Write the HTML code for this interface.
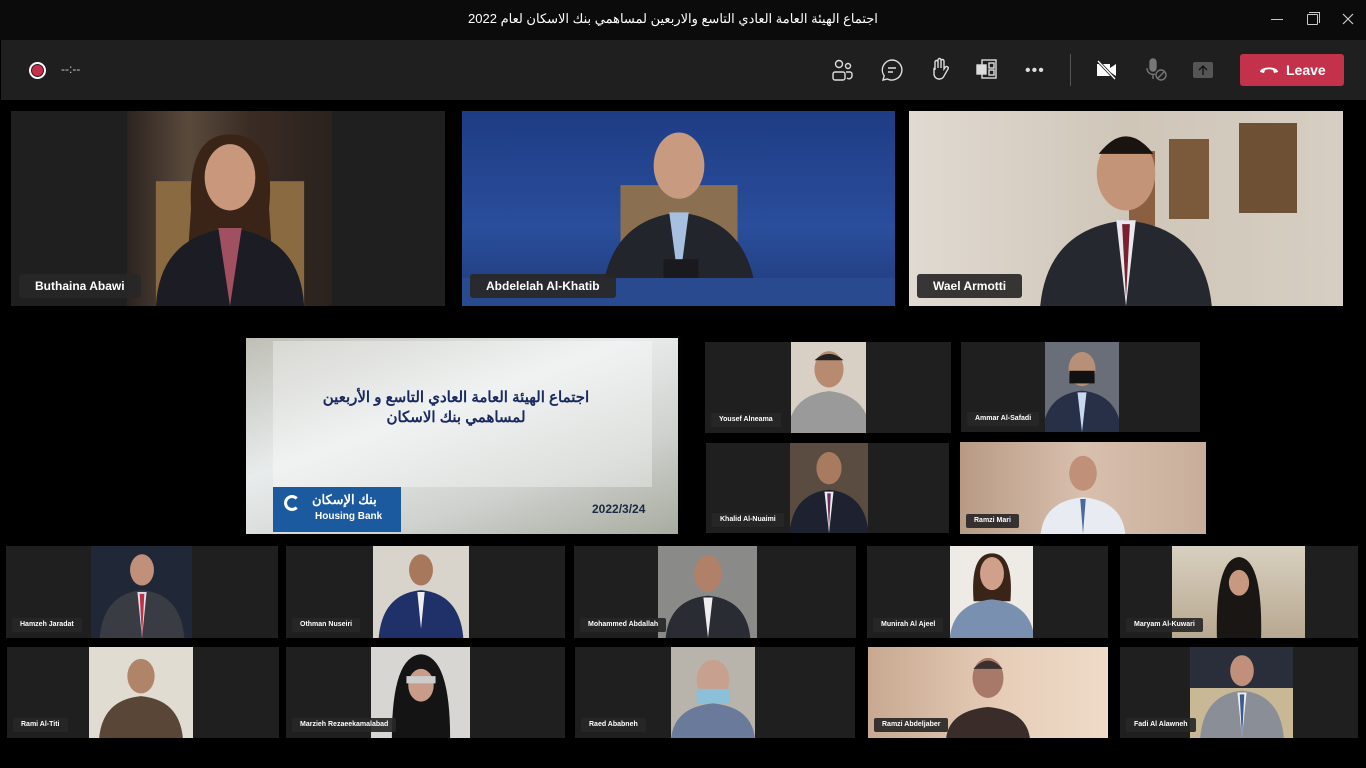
<!DOCTYPE html>
<html><head><meta charset="utf-8"><style>
*{margin:0;padding:0;box-sizing:border-box}
body{width:1366px;height:768px;background:#000;position:relative;overflow:hidden;font-family:"Liberation Sans","Noto Sans CJK SC",sans-serif}
.a{position:absolute}
.t{position:absolute;background:#201f1f;overflow:hidden}
.p{position:absolute;top:0;bottom:0;overflow:hidden}
.p svg{position:absolute;left:50%;transform:translateX(-50%);bottom:0;height:100%}
.lb{position:absolute;left:8px;bottom:8px;height:24px;background:rgba(40,39,39,.92);color:#fff;font-weight:bold;font-size:12px;line-height:24px;padding:0 16px;border-radius:3px;white-space:nowrap}
.ls{position:absolute;left:6px;bottom:6px;height:14px;background:rgba(40,39,39,.92);color:#fff;font-weight:bold;font-size:7px;line-height:14px;padding:0 8px;border-radius:2px;white-space:nowrap}
</style></head><body>
<div class="a" style="left:0;top:0;width:1366px;height:40px;background:#0b0b0b"></div>
<div class="a" style="left:0;top:11px;width:1346px;text-align:center;color:#fff;font-size:13px;direction:rtl">اجتماع الهيئة العامة العادي التاسع والاربعين لمساهمي بنك الاسكان لعام 2022</div>
<div class="a" style="left:1271px;top:19px;width:12px;height:1px;background:#ccc"></div>
<div class="a" style="left:1307px;top:14px;width:11px;height:11px;border:1px solid #ccc;border-radius:1px"></div>
<div class="a" style="left:1309px;top:12px;width:11px;height:11px;border-top:1px solid #ccc;border-right:1px solid #ccc"></div>
<svg class="a" style="left:1342px;top:13px" width="12" height="12"><path d="M1 1L11 11M11 1L1 11" stroke="#ccc" stroke-width="1.2"/></svg>
<div class="a" style="left:1px;top:40px;width:1365px;height:60px;background:#201f1f"></div>
<div class="a" style="left:29px;top:62px;width:17px;height:17px;border-radius:50%;border:2px solid #fff;background:#c4314b;box-shadow:inset 0 0 0 1px #201f1f"></div>
<div class="a" style="left:61px;top:62px;color:#ccc;font-size:12px">--:--</div>
<svg class="a" style="left:831px;top:58px" width="24" height="24" fill="none" stroke="#ddd" stroke-width="1.4"><circle cx="8" cy="6" r="3.5"/><circle cx="17" cy="8" r="2.5"/><path d="M2 20v-4a2 2 0 0 1 2-2h8a2 2 0 0 1 2 2v4a2 2 0 0 1-2 2H4a2 2 0 0 1-2-2zM15 14h4a2 2 0 0 1 2 2v2a3 3 0 0 1-5 2"/></svg>
<svg class="a" style="left:880px;top:58px" width="24" height="24" fill="none" stroke="#ddd" stroke-width="1.4"><path d="M12 2a10 10 0 1 1-4.5 19L3 22l1.2-4.2A10 10 0 0 1 12 2z"/><path d="M8 10h8M8 14h5"/></svg>
<svg class="a" style="left:929px;top:57px" width="22" height="24" fill="none" stroke="#ddd" stroke-width="1.4"><path d="M6 13V5a1.5 1.5 0 0 1 3 0v6V3a1.5 1.5 0 0 1 3 0v8V4a1.5 1.5 0 0 1 3 0v8l1.5-2a1.6 1.6 0 0 1 2.6 1.8L15 19a5 5 0 0 1-4 3H10a5 5 0 0 1-5-5v-5a1.5 1.5 0 0 1 1-1.4"/></svg>
<svg class="a" style="left:976px;top:58px" width="22" height="22" fill="none" stroke="#ddd" stroke-width="1.4"><rect x="6" y="2" width="14" height="18"/><rect x="13" y="5" width="5" height="5"/><rect x="13" y="12" width="5" height="5"/><rect x="1" y="7" width="9" height="9" fill="#ddd"/></svg>
<div class="a" style="left:1025px;top:62px;color:#ddd;font-size:16px;letter-spacing:1px">•••</div>
<div class="a" style="left:1070px;top:54px;width:1px;height:32px;background:#555"></div>
<svg class="a" style="left:1095px;top:58px" width="24" height="24"><path d="M2 6h13v12H2zM15 10l6-4v12l-6-4z" fill="#fff"/><path d="M3 3L20 21" stroke="#201f1f" stroke-width="3"/><path d="M3 3L20 21" stroke="#fff" stroke-width="1.3"/></svg>
<svg class="a" style="left:1145px;top:57px" width="24" height="26" fill="none" stroke="#777" stroke-width="1.4"><rect x="5" y="2" width="6" height="12" rx="3" fill="#777"/><path d="M2 11a6 6 0 0 0 8 6M8 17v5"/><circle cx="16" cy="18" r="5"/><path d="M13 21l6-6"/></svg>
<div class="a" style="left:1193px;top:62px;width:20px;height:16px;background:#555;border-radius:2px"></div>
<svg class="a" style="left:1197px;top:64px" width="12" height="12" fill="none" stroke="#111" stroke-width="1.3"><path d="M6 11V2M2 6l4-4 4 4"/></svg>
<div class="a" style="left:1240px;top:54px;width:104px;height:32px;background:#c4314b;border-radius:3px;color:#fff;font-weight:bold;font-size:14px;line-height:32px;padding-left:46px">Leave</div>
<svg class="a" style="left:1259px;top:63px" width="20" height="12"><path d="M1 9C1 3 19 3 19 9L15 10 14 7C11 6 9 6 6 7L5 10z" fill="#fff"/></svg>

<div class="t" style="left:11px;top:111px;width:434px;height:195px">
 <div class="p" style="left:116px;width:205px;background:linear-gradient(90deg,#2c2420,#5a4a3c 30%,#3a2c24 60%,#2a221e)"><svg viewBox="0 0 100 100"><rect x="12" y="36" width="76" height="64" fill="#8a6a40"/><path d="M30 50Q28 12 50 12Q74 12 70 50L72 80 28 80z" fill="#3a2418"/><ellipse cx="50" cy="34" rx="13" ry="17" fill="#c8977c"/><path d="M12 100Q14 64 50 60Q86 64 88 100Z" fill="#1c1c24"/><path d="M44 60L50 100 56 60Z" fill="#a05060"/></svg></div>
 <div class="lb">Buthaina Abawi</div></div>
<div class="t" style="left:462px;top:111px;width:433px;height:195px">
 <div class="p" style="left:0;width:433px;background:linear-gradient(180deg,#1e3c84,#2a4e9c 60%,#203a78)"><svg viewBox="0 0 100 100"><rect x="20" y="38" width="60" height="40" fill="#8a7050"/><ellipse cx="50" cy="28" rx="13" ry="17" fill="#c89a80"/><path d="M10 100Q12 56 50 52Q88 56 90 100Z" fill="#23252c"/><path d="M45 52L50 90 55 52Z" fill="#a8c0e0"/><rect x="42" y="76" width="18" height="24" fill="#1a1a1e"/></svg><div class="a" style="left:0;bottom:0;width:433px;height:28px;background:#2a4a90"></div></div>
 <div class="lb">Abdelelah Al-Khatib</div></div>
<div class="t" style="left:909px;top:111px;width:434px;height:195px">
 <div class="p" style="left:0;width:434px;background:linear-gradient(90deg,#e0dad2,#cfc6b8 50%,#d6cec2)"><div class="a" style="left:220px;top:40px;width:26px;height:75px;background:#8a6040"></div><div class="a" style="left:260px;top:28px;width:40px;height:80px;background:#7a5a3a"></div><div class="a" style="left:330px;top:12px;width:58px;height:90px;background:#6e5034"></div><svg viewBox="0 0 100 100"><ellipse cx="50" cy="32" rx="15" ry="19" fill="#c49478"/><path d="M36 22Q50 4 64 22" fill="#1a1410"/><path d="M6 100Q10 60 50 56Q90 60 94 100Z" fill="#262830"/><path d="M45 56L50 100 55 56Z" fill="#e8e8ee"/><path d="M48 58L50 96 52 58Z" fill="#7a2030"/></svg></div>
 <div class="lb">Wael Armotti</div></div>

<div class="a" style="left:246px;top:338px;width:432px;height:196px;background:linear-gradient(160deg,#bfbfb6,#e8ecec 40%,#cfd2ce 70%,#a8aca0)">
 <div class="a" style="left:27px;top:3px;width:379px;height:146px;background:rgba(255,255,255,.35)"></div>
 <div class="a" style="left:60px;top:50px;width:300px;text-align:center;color:#1a2a60;font-weight:bold;font-size:15px;line-height:20px;direction:rtl">اجتماع الهيئة العامة العادي التاسع و الأربعين<br>لمساهمي بنك الاسكان</div>
 <div class="a" style="left:27px;top:149px;width:128px;height:45px;background:#1c5aa0"></div>
 <div class="a" style="left:38px;top:157px;width:16px;height:16px;border-radius:50%;border:3px solid #fff;border-right-color:transparent"></div>
 <div class="a" style="left:66px;top:154px;color:#fff;font-size:13px;font-weight:bold;direction:rtl">بنك الإسكان</div>
 <div class="a" style="left:69px;top:173px;color:#fff;font-size:10px;font-weight:bold">Housing Bank</div>
 <div class="a" style="left:346px;top:164px;color:#1a2a40;font-size:12px;font-weight:bold">2022/3/24</div>
</div>

<div class="t" style="left:705px;top:342px;width:246px;height:91px"><div class="p" style="left:86px;width:75px;background:#d8d0c4"><svg viewBox="0 0 100 100"><ellipse cx="50" cy="30" rx="16" ry="20" fill="#b88a70"/><path d="M34 20Q50 6 66 20" fill="#222"/><path d="M4 100Q8 58 50 54Q92 58 96 100Z" fill="#9a9a9a"/></svg></div><div class="ls">Yousef Alneama</div></div>
<div class="t" style="left:961px;top:342px;width:239px;height:90px"><div class="p" style="left:84px;width:74px;background:#6a6e78"><svg viewBox="0 0 100 100"><ellipse cx="50" cy="30" rx="15" ry="19" fill="#b89078"/><rect x="36" y="32" width="28" height="14" fill="#111"/><path d="M6 100Q10 58 50 54Q90 58 94 100Z" fill="#283048"/><path d="M45 56L50 100 55 56Z" fill="#c8d8ee"/></svg></div><div class="ls">Ammar Al-Safadi</div></div>
<div class="t" style="left:706px;top:443px;width:243px;height:90px"><div class="p" style="left:84px;width:78px;background:#5a4c40"><svg viewBox="0 0 100 100"><ellipse cx="50" cy="28" rx="14" ry="18" fill="#a87a60"/><path d="M6 100Q10 56 50 52Q90 56 94 100Z" fill="#1e2230"/><path d="M45 54L50 100 55 54Z" fill="#eee"/><path d="M48 56L50 96 52 56Z" fill="#6a3060"/></svg></div><div class="ls">Khalid Al-Nuaimi</div></div>
<div class="t" style="left:960px;top:442px;width:246px;height:92px"><div class="p" style="left:0;width:246px;background:linear-gradient(90deg,#b89a84,#d8c0ae 50%,#c8ae9a)"><svg viewBox="0 0 100 100"><ellipse cx="50" cy="34" rx="15" ry="19" fill="#c09078"/><path d="M4 100Q8 64 50 60Q92 64 96 100Z" fill="#e8ecf2"/><path d="M47 62L50 100 53 62Z" fill="#4a6a9a"/></svg></div><div class="ls">Ramzi Mari</div></div>

<div class="t" style="left:6px;top:546px;width:272px;height:92px"><div class="p" style="left:85px;width:101px;background:#202838"><svg viewBox="0 0 100 100"><ellipse cx="50" cy="26" rx="13" ry="17" fill="#c0907a"/><path d="M4 100Q8 52 50 48Q92 52 96 100Z" fill="#3a3c44"/><path d="M45 50L50 100 55 50Z" fill="#dde"/><path d="M47.5 52L50 100 52.5 52Z" fill="#c03040"/></svg></div><div class="ls">Hamzeh Jaradat</div></div>
<div class="t" style="left:286px;top:546px;width:279px;height:92px"><div class="p" style="left:87px;width:96px;background:#d8d4cc"><svg viewBox="0 0 100 100"><ellipse cx="50" cy="26" rx="13" ry="17" fill="#a8785c"/><path d="M4 100Q8 52 50 48Q92 52 96 100Z" fill="#203068"/><path d="M46 50L50 90 54 50Z" fill="#eee"/></svg></div><div class="ls">Othman Nuseiri</div></div>
<div class="t" style="left:574px;top:546px;width:282px;height:92px"><div class="p" style="left:84px;width:99px;background:#8a8a88"><svg viewBox="0 0 100 100"><ellipse cx="50" cy="30" rx="15" ry="20" fill="#b08068"/><path d="M4 100Q8 58 50 54Q92 58 96 100Z" fill="#2a2c34"/><path d="M45 56L50 100 55 56Z" fill="#eee"/></svg></div><div class="ls">Mohammed  Abdallah</div></div>
<div class="t" style="left:867px;top:546px;width:241px;height:92px"><div class="p" style="left:83px;width:83px;background:#eeeae6"><svg viewBox="0 0 100 100"><path d="M30 60Q26 8 50 8Q74 8 70 60z" fill="#3a2418"/><ellipse cx="50" cy="30" rx="13" ry="18" fill="#d0a08a"/><path d="M4 100Q8 62 50 58Q92 62 96 100Z" fill="#7a90b0"/></svg></div><div class="ls">Munirah Al Ajeel</div></div>
<div class="t" style="left:1120px;top:546px;width:238px;height:92px"><div class="p" style="left:52px;width:133px;background:linear-gradient(180deg,#d8d0c0,#b8a890)"><svg viewBox="0 0 100 100"><path d="M26 100Q24 14 50 12Q76 14 74 100Z" fill="#1a1614"/><ellipse cx="50" cy="40" rx="11" ry="14" fill="#c89880"/></svg></div><div class="ls">Maryam Al-Kuwari</div></div>

<div class="t" style="left:7px;top:647px;width:272px;height:91px"><div class="p" style="left:82px;width:104px;background:#e0dcd2"><svg viewBox="0 0 100 100"><ellipse cx="50" cy="32" rx="15" ry="19" fill="#b08468"/><path d="M4 100Q8 58 50 54Q92 58 96 100Z" fill="#5a4636"/></svg></div><div class="ls">Rami Al-Titi</div></div>
<div class="t" style="left:286px;top:647px;width:279px;height:91px"><div class="p" style="left:85px;width:99px;background:#d8d6d2"><svg viewBox="0 0 100 100"><path d="M18 100Q18 10 50 8Q82 10 82 100Z" fill="#141414"/><ellipse cx="50" cy="42" rx="14" ry="18" fill="#c89c88"/><rect x="34" y="32" width="32" height="8" fill="#ccc"/></svg></div><div class="ls">Marzieh Rezaeekamalabad</div></div>
<div class="t" style="left:575px;top:647px;width:280px;height:91px"><div class="p" style="left:96px;width:84px;background:#b8b4ac"><svg viewBox="0 0 100 100"><ellipse cx="50" cy="36" rx="18" ry="22" fill="#c8a090"/><rect x="32" y="46" width="36" height="16" fill="#8cc0d8"/><path d="M4 100Q8 66 50 62Q92 66 96 100Z" fill="#6a7a9a"/></svg></div><div class="ls">Raed Ababneh</div></div>
<div class="t" style="left:868px;top:647px;width:240px;height:91px"><div class="p" style="left:0;width:240px;background:linear-gradient(90deg,#c8a890,#e6cdb8 55%,#eedbc8)"><svg viewBox="0 0 100 100"><ellipse cx="50" cy="34" rx="17" ry="22" fill="#a87868"/><path d="M34 24Q50 6 66 24" fill="#3a3030"/><path d="M4 100Q8 70 50 66Q92 70 96 100Z" fill="#3a2c28"/></svg></div><div class="ls">Ramzi Abdeljaber</div></div>
<div class="t" style="left:1120px;top:647px;width:238px;height:91px"><div class="p" style="left:70px;width:103px;background:linear-gradient(180deg,#2a2e3a 45%,#c8b896 45%)"><svg viewBox="0 0 100 100"><ellipse cx="50" cy="26" rx="13" ry="17" fill="#c0907a"/><path d="M4 100Q8 52 50 48Q92 52 96 100Z" fill="#8a8e96"/><path d="M45 50L50 100 55 50Z" fill="#eee"/><path d="M47.5 52L50 100 52.5 52Z" fill="#3a5a90"/></svg></div><div class="ls">Fadi Al Alawneh</div></div>
</body></html>
